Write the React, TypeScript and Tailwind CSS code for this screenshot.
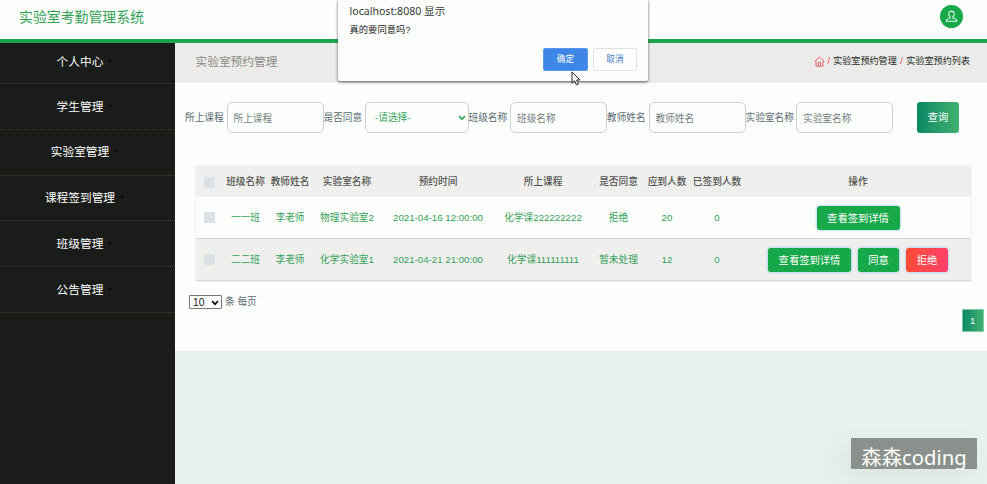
import { ReactNode } from "react";

const menu = ["个人中心", "学生管理", "实验室管理", "课程签到管理", "班级管理", "公告管理"];

const columns = [
  { title: "", width: 27 },
  { title: "班级名称", width: 45 },
  { title: "教师姓名", width: 44 },
  { title: "实验室名称", width: 70 },
  { title: "预约时间", width: 112 },
  { title: "所上课程", width: 98 },
  { title: "是否同意", width: 53 },
  { title: "应到人数", width: 44 },
  { title: "已签到人数", width: 56 },
  { title: "操作", width: 226 },
];

const rows = [
  { cells: ["一一班", "李老师", "物理实验室2", "2021-04-16 12:00:00", "化学课222222222", "拒绝", "20", "0"], pending: false },
  { cells: ["二二班", "李老师", "化学实验室1", "2021-04-21 21:00:00", "化学课111111111", "暂未处理", "12", "0"], pending: true },
];

function Chevron({ className }: { className: string }) {
  return (
    <svg viewBox="0 0 8 6" className={className} fill="none" stroke="currentColor" strokeWidth="1.7">
      <path d="M1 1.2 4 4.2 7 1.2" />
    </svg>
  );
}

function Field({ label, wide }: { label: string; wide?: boolean }) {
  return (
    <label className="flex items-center">
      <span className={`${wide ? "w-[48px]" : "w-[39px]"} shrink-0 whitespace-nowrap pt-px text-[#596a74]`}>{label}</span>
      <input
        placeholder={label}
        className="ml-[2.5px] h-[31px] w-[97px] rounded-[5px] border border-[#cfd2d0] bg-transparent px-[6px] pt-[2px] text-[9.7px] placeholder:text-[#737d82]"
      />
    </label>
  );
}

function Action({ children, className }: { children: ReactNode; className: string }) {
  return (
    <button className={`h-6 rounded-[3px] pt-px text-[10.3px] text-white shadow-[0_0_3px_#87b6e8] ${className}`}>
      {children}
    </button>
  );
}

function Sidebar() {
  return (
    <nav className="w-[175px] shrink-0 bg-[#1a1c19] text-[11.7px] text-white">
      {menu.map((item, i) => (
        <div
          key={item}
          className={`flex items-center justify-center border-b border-dotted border-[#3c3d4b] pr-[15px] ${
            i === 0 ? "h-[41.2px] pb-[3px]" : "h-[45.7px]"
          }`}
        >
          <span className="relative">
            {item}
            <span className="absolute top-[7px] -right-[10px] border-x-[3px] border-t-[3px] border-x-transparent border-t-[#0d0f0d]" />
          </span>
        </div>
      ))}
    </nav>
  );
}

function Dialog() {
  return (
    <div className="absolute top-0 left-[338px] h-[81px] w-[310px] rounded-b-[2px] bg-[#fdfffc] pl-[11.5px] shadow-[0_1px_3px_#555]">
      <div className="pt-[3px] text-[10.6px] leading-4 text-[#333836] font-['Noto_Sans','Noto_Sans_CJK_SC',sans-serif]">
        localhost:8080 显示
      </div>
      <div className="pt-[4px] text-[9.3px] leading-[15px] text-[#222]">真的要同意吗?</div>
      <div className="mt-[9.5px] flex justify-end gap-[5px] pr-[11px] text-[8.7px]">
        <button className="h-[23px] w-[45px] rounded-[2px] border border-[#5996ec] bg-[#3e87e9] pt-[2px] text-white">确定</button>
        <button className="h-[23px] w-[44px] rounded-[2px] border border-[#dfe3e5] pt-[2px] text-[#3d7bd4]">取消</button>
      </div>
      <svg className="absolute top-[71px] left-[233px] h-[15px] w-[10px]" viewBox="0 0 10 15" fill="#fff" stroke="#202229">
        <path d="M1 .9v11.3l2.6-2.4 1.8 4.1 2-.9-1.8-4h3.3z" />
      </svg>
    </div>
  );
}

export default function App() {
  return (
    <div className="relative flex h-[484px] w-[987px] flex-col overflow-hidden bg-[#e7f0eb] text-[9.7px] font-['Liberation_Sans','Noto_Sans_CJK_SC',sans-serif]">
      <header className="flex h-[43px] shrink-0 items-start justify-between border-b-4 border-[#1ca44c] bg-[#fdfffc] pr-[24.5px] pl-[19px]">
        <h1 className="pt-[5px] text-[13.9px] leading-6 text-[#34a157]">实验室考勤管理系统</h1>
        <div className="mt-[5px] flex size-[23px] items-center justify-center rounded-full bg-[#16a849]">
          <svg className="size-[13px]" viewBox="0 0 14 14" fill="none" stroke="#e8fff0" strokeWidth="1.1">
            <path d="M5.6 7.5C4.5 6.6 4 5.4 4 4.2 4 2.3 5.2 1.2 7 1.2s3 1.1 3 3c0 1.2-.5 2.4-1.6 3.3v1l3.1 1.3c.8.4 1.1 1 1.2 2.4H1.3c.1-1.4.4-2 1.2-2.4l3.1-1.3z" />
          </svg>
        </div>
      </header>

      <div className="flex min-h-0 flex-1">
        <Sidebar />
        <main className="h-[308px] flex-1 bg-[#fdfffc]">
          <div className="flex h-10 items-center justify-between bg-[#ebecea] pr-[17px] pb-[3px] pl-[20.5px]">
            <h2 className="text-[11.7px] text-[#8d8885]">实验室预约管理</h2>
            <div className="flex items-center pt-px text-[9.1px] text-[#1c1e1c]">
              <svg className="mr-[3px] size-[11px]" viewBox="0 0 11 11" fill="none" stroke="#e56368">
                <path d="M.6 5.4 5.5 1l4.9 4.4M2 4.5v5.7h7V4.5M4.3 10V6.5h2.4V10" />
              </svg>
              <span className="mr-[3px] text-[#e4444c]">/</span>
              实验室预约管理
              <span className="mx-[3.5px] text-[#e4444c]">/</span>
              实验室预约列表
            </div>
          </div>

          <form className="mt-[19px] flex h-[31px] items-center pl-[10px]">
            <Field label="所上课程" />
            <label className="flex items-center">
              <span className="w-[39px] shrink-0 whitespace-nowrap pt-px text-[#596a74]">是否同意</span>
              <span className="ml-[2.5px] flex h-[31px] w-[103.5px] items-center justify-between rounded-[5px] border border-[#cfd2d0] pt-px pr-[2px] pl-[9px] text-[#36a65b]">
                -请选择-
                <Chevron className="h-[6px] w-[8px]" />
              </span>
            </label>
            <Field label="班级名称" />
            <Field label="教师姓名" />
            <Field label="实验室名称" wide />
            <button className="ml-6 h-[31px] w-[42px] rounded-[3px] bg-linear-to-r from-[#078965] to-[#3fb16f] pt-px text-[10.3px] text-white">
              查询
            </button>
          </form>

          <table className="mt-[33px] ml-[21px] w-[775px] table-fixed border-separate border-spacing-0 text-center whitespace-nowrap shadow-[0_0_2px_#ddd]">
            <colgroup>
              {columns.map((c) => (
                <col key={c.title} style={{ width: c.width }} />
              ))}
            </colgroup>
            <thead>
              <tr className="h-[31px] bg-[#eff0ee] text-[#535250]">
                {columns.map((c, i) => (
                  <th key={c.title} className="p-0 pt-px font-medium">
                    {i === 0 ? <span className="mx-auto block size-[11px] bg-[#dce1e5]" /> : c.title}
                  </th>
                ))}
              </tr>
            </thead>
            <tbody>
              {rows.map((row) => (
                <tr
                  key={row.cells[0]}
                  className={`h-[42px] text-[#36a05a] ${row.pending ? "bg-[#eff0ee]" : "bg-[#fdfffc]"}`}
                >
                  <td className="border-b border-[#d3d6d3] p-0">
                    <span className="mx-auto block size-[11px] bg-[#dce1e5]" />
                  </td>
                  {row.cells.map((cell, i) => (
                    <td key={i} className="border-b border-[#d3d6d3] p-0 pt-px">
                      {cell}
                    </td>
                  ))}
                  <td className="border-b border-[#d3d6d3] p-0 pt-px">
                    <div className="flex justify-center gap-[7px]">
                      <Action className="w-[83px] bg-[#16a849]">查看签到详情</Action>
                      {row.pending && (
                        <>
                          <Action className="w-[41px] bg-[#16a849]">同意</Action>
                          <Action className="w-[42px] bg-linear-to-r from-[#ff4b2e] to-[#ff4069]">拒绝</Action>
                        </>
                      )}
                    </div>
                  </td>
                </tr>
              ))}
            </tbody>
          </table>

          <div className="mt-[14px] flex h-[14px] items-center pl-[14px] text-[#596a74]">
            <span className="mr-[3px] flex h-[14px] w-[33px] items-center justify-between rounded-[1px] border border-[#777] pt-px pr-[2px] pl-[3px] text-[10.3px] text-[#111]">
              10
              <Chevron className="h-[6px] w-[8px]" />
            </span>
            <span className="pt-px">条 每页</span>
          </div>
          <div className="flex justify-end pr-[3px]">
            <button className="h-[23px] w-[22.5px] border border-[#83c9a9] bg-linear-to-r from-[#078965] to-[#3fb16f] pt-px text-white">1</button>
          </div>
        </main>
      </div>

      <Dialog />
      <div className="absolute top-[438px] left-[851px] flex h-[31px] w-[126px] items-center justify-center bg-[#8a918d] pt-[8px] text-[20.3px] whitespace-nowrap text-white shadow-[-8px_8px_20px_#dce5df] font-['Noto_Sans','Noto_Sans_CJK_SC',sans-serif]">
        森森coding
      </div>
    </div>
  );
}
